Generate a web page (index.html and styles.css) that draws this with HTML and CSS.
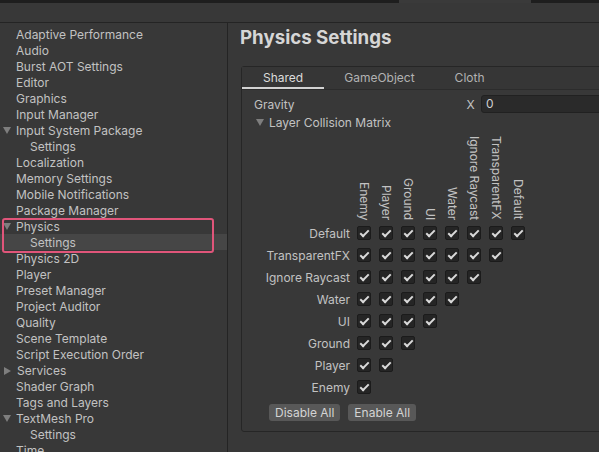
FILE: index.html
```html
<!DOCTYPE html>
<html lang="en">
<head>
  <meta charset="UTF-8" />
  <title>Project Settings</title>
  <meta name="viewport" content="width=device-width, initial-scale=1.0" />
  <link rel="stylesheet" href="styles.css">
</head>
<body>
  <div class="top-strip">
    <div class="strip-dark first"></div>
    <div class="strip-gap"></div>
    <div class="strip-dark rest"></div>
  </div>
  <div class="toolbar"></div>

  <div class="main">
    <ul class="sidebar">
      <li>Adaptive Performance</li>
      <li>Audio</li>
      <li>Burst AOT Settings</li>
      <li>Editor</li>
      <li>Graphics</li>
      <li>Input Manager</li>
      <li class="fold open">Input System Package</li>
      <li class="child">Settings</li>
      <li>Localization</li>
      <li>Memory Settings</li>
      <li>Mobile Notifications</li>
      <li>Package Manager</li>
      <li class="fold open">Physics</li>
      <li class="child selected">Settings</li>
      <li>Physics 2D</li>
      <li>Player</li>
      <li>Preset Manager</li>
      <li>Project Auditor</li>
      <li>Quality</li>
      <li>Scene Template</li>
      <li>Script Execution Order</li>
      <li class="fold closed">Services</li>
      <li>Shader Graph</li>
      <li>Tags and Layers</li>
      <li class="fold open">TextMesh Pro</li>
      <li class="child">Settings</li>
      <li>Time</li>
    </ul>

    <div class="content">
      <h1 class="title">Physics Settings</h1>

      <div class="frame">
        <div class="tabs">
          <div class="tab active">Shared</div>
          <div class="tab">GameObject</div>
          <div class="tab">Cloth</div>
        </div>

        <div class="frame-body">
          <div class="prop-row">
            <span class="prop-label">Gravity</span>
            <span class="axis">X</span>
            <div class="field">0</div>
          </div>

          <div class="foldout">Layer Collision Matrix</div>

          <div class="matrix">
            <div class="mhead">
              <div class="mlabel"></div>
              <div class="vcell"><span>Enemy</span></div>
              <div class="vcell"><span>Player</span></div>
              <div class="vcell"><span>Ground</span></div>
              <div class="vcell"><span>UI</span></div>
              <div class="vcell"><span>Water</span></div>
              <div class="vcell"><span>Ignore Raycast</span></div>
              <div class="vcell"><span>TransparentFX</span></div>
              <div class="vcell"><span>Default</span></div>
            </div>
            <div class="mrow">
              <div class="mlabel">Default</div>
              <div class="cell"><span class="check"></span></div>
              <div class="cell"><span class="check"></span></div>
              <div class="cell"><span class="check"></span></div>
              <div class="cell"><span class="check"></span></div>
              <div class="cell"><span class="check"></span></div>
              <div class="cell"><span class="check"></span></div>
              <div class="cell"><span class="check"></span></div>
              <div class="cell"><span class="check"></span></div>
            </div>
            <div class="mrow">
              <div class="mlabel">TransparentFX</div>
              <div class="cell"><span class="check"></span></div>
              <div class="cell"><span class="check"></span></div>
              <div class="cell"><span class="check"></span></div>
              <div class="cell"><span class="check"></span></div>
              <div class="cell"><span class="check"></span></div>
              <div class="cell"><span class="check"></span></div>
              <div class="cell"><span class="check"></span></div>
            </div>
            <div class="mrow">
              <div class="mlabel">Ignore Raycast</div>
              <div class="cell"><span class="check"></span></div>
              <div class="cell"><span class="check"></span></div>
              <div class="cell"><span class="check"></span></div>
              <div class="cell"><span class="check"></span></div>
              <div class="cell"><span class="check"></span></div>
              <div class="cell"><span class="check"></span></div>
            </div>
            <div class="mrow">
              <div class="mlabel">Water</div>
              <div class="cell"><span class="check"></span></div>
              <div class="cell"><span class="check"></span></div>
              <div class="cell"><span class="check"></span></div>
              <div class="cell"><span class="check"></span></div>
              <div class="cell"><span class="check"></span></div>
            </div>
            <div class="mrow">
              <div class="mlabel">UI</div>
              <div class="cell"><span class="check"></span></div>
              <div class="cell"><span class="check"></span></div>
              <div class="cell"><span class="check"></span></div>
              <div class="cell"><span class="check"></span></div>
            </div>
            <div class="mrow">
              <div class="mlabel">Ground</div>
              <div class="cell"><span class="check"></span></div>
              <div class="cell"><span class="check"></span></div>
              <div class="cell"><span class="check"></span></div>
            </div>
            <div class="mrow">
              <div class="mlabel">Player</div>
              <div class="cell"><span class="check"></span></div>
              <div class="cell"><span class="check"></span></div>
            </div>
            <div class="mrow">
              <div class="mlabel">Enemy</div>
              <div class="cell"><span class="check"></span></div>
            </div>
          </div>

          <div class="buttons">
            <button class="btn">Disable All</button>
            <button class="btn">Enable All</button>
          </div>
        </div>
      </div>
    </div>
  </div>

  <!-- callout around the selected Physics entry -->
  <div class="highlight"></div>
</body>
</html>
```

FILE: styles.css
```css
body {
  margin: 0;
  width: 599px;
  height: 452px;
  overflow: hidden;
  position: relative;
  background: #383838;
  font-family: Inter, "Noto Sans", sans-serif;
  font-size: 12px;
  color: #c2c2c2;
}

/* window strip + toolbar */
.top-strip {
  display: flex;
  height: 3px;
}

.strip-dark {
  background: #1e1e1e;
}

.strip-dark.first {
  width: 399px;
}

.strip-dark.rest {
  flex: 1;
}

.strip-gap {
  width: 132px;
  background: #3a3a3a;
}

.toolbar {
  height: 19px;
  border-bottom: 1px solid #242424;
}

.main {
  display: flex;
  height: 429px;
}

/* left tree */
.sidebar {
  list-style: none;
  margin: 0;
  padding: 3px 0 0;
  width: 227px;
  border-right: 1px solid #242424;
  overflow: hidden;
  flex-shrink: 0;
}

.sidebar li {
  height: 16px;
  line-height: 18px;
  padding-left: 16px;
  white-space: nowrap;
}

.sidebar li.child {
  padding-left: 30px;
}

.sidebar li.selected {
  background: #464646;
}

.sidebar li.fold {
  padding-left: 3px;
}

.sidebar li.fold::before {
  content: "";
  display: inline-block;
  width: 0;
  height: 0;
  vertical-align: middle;
}

.sidebar li.open::before {
  border-left: 4px solid transparent;
  border-right: 4px solid transparent;
  border-top: 7px solid #7e7e7e;
  margin: -2px 5px 0 0;
}

.sidebar li.closed::before {
  border-top: 4px solid transparent;
  border-bottom: 4px solid transparent;
  border-left: 7px solid #7e7e7e;
  margin: -2px 6px 0 1px;
}

/* settings panel */
.content {
  flex: 1;
  min-width: 0;
  overflow: hidden;
  padding-left: 12px;
}

.title {
  margin: 3px 0 16px;
  font-size: 18.7px;
  line-height: 24px;
  font-weight: 700;
  color: #d6d6d6;
}

.frame {
  margin-left: 1px;
  width: 420px;
  border: 1px solid #262626;
  border-radius: 3px 0 0 3px;
}

.tabs {
  display: flex;
  height: 22px;
  border-bottom: 1px solid #2c2c2c;
  background: #363636;
}

.tab {
  padding: 0 20px;
  line-height: 22px;
  color: #b2b2b2;
}

.tab.active {
  padding: 0 21px;
  color: #dcdcdc;
  box-shadow: inset 0 -2px #d2d2d2;
}

.frame-body {
  padding: 5px 0 10px 12px;
}

.prop-row {
  display: flex;
  align-items: center;
  height: 18px;
}

.prop-label {
  width: 208px;
}

.axis {
  width: 17px;
  text-align: center;
}

.field {
  flex: 1;
  margin-left: 2px;
  height: 18px;
  box-sizing: border-box;
  background: #2a2a2a;
  border: 1px solid #212121;
  border-radius: 3px;
  padding-left: 4px;
  line-height: 16px;
  color: #d0d0d0;
}

.foldout {
  margin-top: 2px;
  height: 16px;
  line-height: 16px;
  padding-left: 2px;
}

.foldout::before {
  content: "";
  display: inline-block;
  vertical-align: middle;
  border-left: 4px solid transparent;
  border-right: 4px solid transparent;
  border-top: 7px solid #7e7e7e;
  margin: -2px 5px 0 0;
}

/* collision matrix */
.mhead {
  display: flex;
  height: 91px;
}

.vcell {
  width: 22px;
  display: flex;
  align-items: flex-end;
  justify-content: center;
  padding-bottom: 2px;
  box-sizing: border-box;
}

.vcell span {
  writing-mode: vertical-rl;
  line-height: 16px;
  white-space: nowrap;
}

.mrow {
  display: flex;
  height: 22px;
  align-items: center;
}

.mlabel {
  width: 99px;
  padding-right: 3px;
  box-sizing: border-box;
  text-align: right;
  white-space: nowrap;
  flex-shrink: 0;
}

.cell {
  width: 22px;
  display: flex;
  justify-content: center;
}

.check {
  position: relative;
  width: 14px;
  height: 14px;
  box-sizing: border-box;
  background: #252525;
  border: 1px solid #1b1b1b;
  border-radius: 2px;
}

.check::after {
  content: "";
  position: absolute;
  left: 4px;
  top: 1px;
  width: 3px;
  height: 7px;
  border-right: 2px solid #dadada;
  border-bottom: 2px solid #dadada;
  transform: rotate(45deg);
}

.buttons {
  display: flex;
  gap: 8px;
  margin-top: 6px;
  padding-left: 15px;
}

.btn {
  height: 17px;
  padding: 0 6px;
  border: none;
  border-radius: 3px;
  background: #585858;
  color: #d4d4d4;
  font-family: inherit;
  font-size: 12px;
  line-height: 17px;
}

.highlight {
  position: absolute;
  left: 2px;
  top: 218px;
  width: 212px;
  height: 35px;
  box-sizing: border-box;
  border: 2px solid #e0557a;
  border-radius: 3px;
}
```
